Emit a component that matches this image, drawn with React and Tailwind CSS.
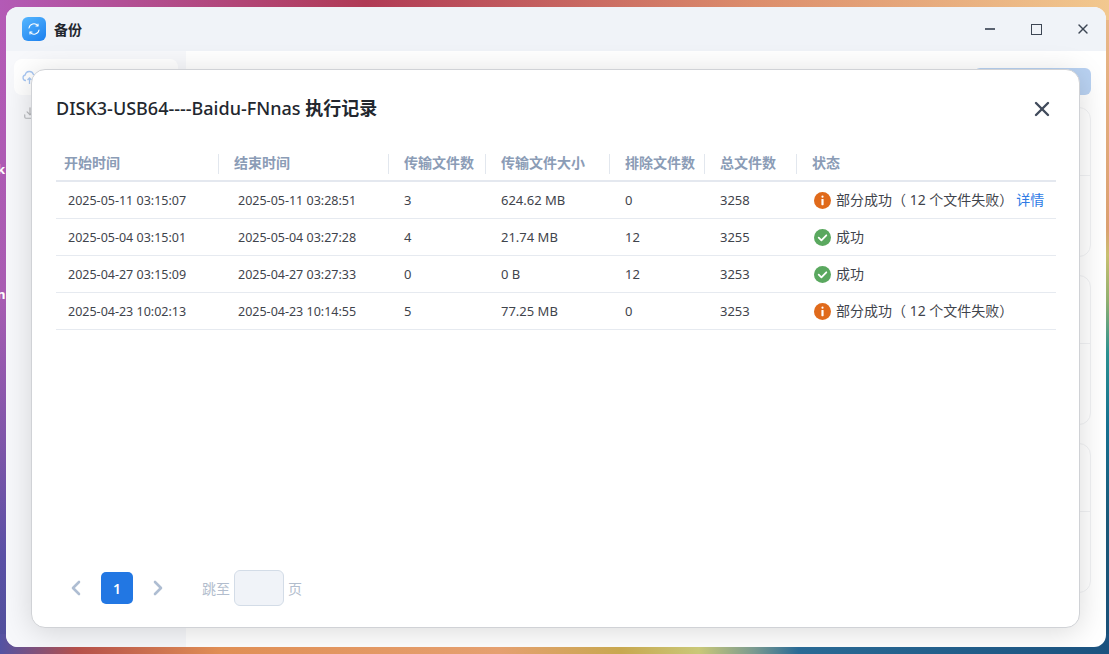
import { ChevronLeft, ChevronRight, X, Download } from "lucide-react";

const FONT = "font-['Noto_Sans','Noto_Sans_CJK_SC',sans-serif]";

const COLUMNS = [
  { label: "开始时间", head: "pl-2", cell: "pl-3 pt-[2px]" },
  { label: "结束时间", head: "pl-[15px]", cell: "pl-[19px] pt-[2px]" },
  { label: "传输文件数", head: "pl-[15px]", cell: "pl-[15px] pt-[2px]" },
  { label: "传输文件大小", head: "pl-[15px]", cell: "pl-[15px] pt-[2px]" },
  { label: "排除文件数", head: "pl-[15px]", cell: "pl-[15px] pt-[2px]" },
  { label: "总文件数", head: "pl-[15px]", cell: "pl-[15px] pt-[2px]" },
  { label: "状态", head: "pl-[15px]", cell: "pl-[17px]" },
];

const ROWS = [
  { start: "2025-05-11 03:15:07", end: "2025-05-11 03:28:51", count: "3", size: "624.62 MB", excluded: "0", total: "3258", partial: true, details: true },
  { start: "2025-05-04 03:15:01", end: "2025-05-04 03:27:28", count: "4", size: "21.74 MB", excluded: "12", total: "3255" },
  { start: "2025-04-27 03:15:09", end: "2025-04-27 03:27:33", count: "0", size: "0 B", excluded: "12", total: "3253" },
  { start: "2025-04-23 10:02:13", end: "2025-04-23 10:14:55", count: "5", size: "77.25 MB", excluded: "0", total: "3253", partial: true },
];

const GRID = "grid grid-cols-[163px_170px_97px_124px_95px_92px_1fr]";

function AppIcon() {
  return (
    <div className="flex h-6 w-6 items-center justify-center rounded-[6px] bg-[linear-gradient(145deg,#55b6ff,#1c7fee)]">
      <svg width="16" height="16" viewBox="0 0 16 16" fill="none" stroke="white" strokeWidth="1.1" strokeLinecap="round">
        <path d="M3 7A5 5 0 0 1 11.8 4.6" />
        <path d="M13 9A5 5 0 0 1 4.2 11.4" />
        <path d="M12 3v2h-2" />
        <path d="M4 13v-2h2" />
      </svg>
    </div>
  );
}

function InfoIcon() {
  return (
    <svg width="17" height="17" viewBox="0 0 17 17" className="shrink-0">
      <circle cx="8.5" cy="8.5" r="8.5" fill="#e06a1b" />
      <rect x="7.4" y="3.6" width="2.2" height="2.2" rx="1.1" fill="white" />
      <rect x="7.4" y="7" width="2.2" height="6.2" rx="0.6" fill="white" />
    </svg>
  );
}

function CheckIcon() {
  return (
    <svg width="17" height="17" viewBox="0 0 17 17" className="shrink-0">
      <circle cx="8.5" cy="8.5" r="8.5" fill="#5aa85f" />
      <path d="M4.7 8.7l2.7 2.6 4.9-5" fill="none" stroke="white" strokeWidth="1.8" strokeLinecap="round" strokeLinejoin="round" />
    </svg>
  );
}

function BackgroundCard() {
  return (
    <div className="flex h-[150px] flex-col rounded-[12px] border border-[#f1f2f4]">
      <div className="h-[68px] border-b border-[#f1f2f4]" />
    </div>
  );
}

function HistoryModal() {
  return (
    <div className="absolute left-[25px] top-[62px] flex h-[559px] w-[1049px] flex-col rounded-[14px] border border-[#d0d2d6] bg-white pl-[24px] pr-[23px] shadow-[0_4px_30px_rgba(0,0,0,0.15)]">
      <div className="flex h-[77px] items-center justify-between">
        <h2 className="text-[18px] font-medium text-[#23272e]">
          DISK3-USB64----Baidu-FNnas <span className="font-bold">执行记录</span>
        </h2>
        <button className="mr-[2px] text-[#414b5c]">
          <X size={24} strokeWidth={2.4} />
        </button>
      </div>

      {/* Table */}
      <div className="flex-1">
        <div className={`${GRID} h-[35px] items-center border-b-2 border-[#e4e8ef] text-[14px] font-semibold text-[#8b9cb6]`}>
          {COLUMNS.map((col, i) => (
            <div key={col.label} className={`${col.head} ${i === 6 ? "" : "border-r border-[#e2e7ee]"} flex h-5 items-center`}>
              <span className="mb-[2px]">{col.label}</span>
            </div>
          ))}
        </div>
        {ROWS.map((row) => (
          <div key={row.start} className={`${GRID} h-[37px] items-center border-b border-[#e6eaf0] text-[13px] text-[#3f444c]`}>
            <div className={`${COLUMNS[0].cell} text-[12.5px]`}>{row.start}</div>
            <div className={`${COLUMNS[1].cell} text-[12.5px]`}>{row.end}</div>
            <div className={COLUMNS[2].cell}>{row.count}</div>
            <div className={COLUMNS[3].cell}>{row.size}</div>
            <div className={COLUMNS[4].cell}>{row.excluded}</div>
            <div className={COLUMNS[5].cell}>{row.total}</div>
            <div className={`${COLUMNS[6].cell} flex items-center text-[14px]`}>
              {row.partial ? <InfoIcon /> : <CheckIcon />}
              <span className="mb-[2px] ml-[5px]">{row.partial ? "部分成功（ 12 个文件失败）" : "成功"}</span>
              {row.details && <a className="mb-[2px] ml-[3px] text-[#2f7be5]">详情</a>}
            </div>
          </div>
        ))}
      </div>

      {/* Pagination */}
      <div className="mb-[21px] flex items-center text-[14px] text-[#b2bdcd]">
        <ChevronLeft size={24} strokeWidth={2.6} className="ml-2 text-[#aebdd2]" />
        <button className="ml-[13px] h-8 w-8 rounded-[5px] bg-[#2277e3] text-[14px] font-semibold text-white">1</button>
        <ChevronRight size={24} strokeWidth={2.6} className="ml-[13px] text-[#aebdd2]" />
        <span className="ml-[32px]">跳至</span>
        <div className="ml-[4px] h-9 w-[50px] rounded-[6px] border border-[#d3dce7] bg-[#f0f3f8]" />
        <span className="ml-[4px]">页</span>
      </div>
    </div>
  );
}

export default function App() {
  return (
    <div className={`${FONT} relative h-[654px] w-[1109px] overflow-hidden pl-[6px] pt-[7px] [background:linear-gradient(90deg,#b35ab6,#b03a55_33%,#dc8d6c_68%,#f2c88f)_top/100%_20px_no-repeat,linear-gradient(90deg,#5352a3,#b5504a_7%,#e08f55_20%,#e5a070_45%,#c8a850_56%,#c9c878_63%,#7a9a90_68%,#2a6a95_72%,#1b527f)_bottom/100%_20px_no-repeat,linear-gradient(180deg,#b55ab6,#a85cb2_45%,#7a55a8_70%,#5a50a5_85%,#4f4f9a)_left/20px_100%_no-repeat,linear-gradient(180deg,#eab98a,#dba070_35%,#c8c070_39%,#90b070_46%,#2a9090_54%,#157090_65%,#1a5878_80%,#1a4f78)_right/20px_100%_no-repeat]`}>
      {/* Desktop icon labels cut off by the window */}
      <span className="absolute left-[-3px] top-[160px] text-[13px] font-bold text-white">k</span>
      <span className="absolute left-[-3px] top-[285px] text-[13px] font-bold text-white">n</span>

      <div className="relative flex h-[640px] w-[1100px] flex-col overflow-hidden rounded-[12px] bg-white">
        {/* Title bar */}
        <div className="flex h-[44px] shrink-0 items-center bg-[#f0f3f8] pl-4">
          <AppIcon />
          <span className="ml-2 text-[14px] font-bold text-[#23272e]">备份</span>
          <div className="ml-auto flex items-center text-[#3d4654]">
            <div className="h-[2px] w-[10px] bg-[#5a6270]" />
            <div className="ml-[36px] h-[11px] w-[11px] border-[1.5px] border-[#3d4654]" />
            <X size={16} strokeWidth={2} className="ml-[33px] mr-[15px]" />
          </div>
        </div>

        {/* Faded page behind the modal */}
        <div className="flex flex-1">
          <aside className="w-[180px] bg-[#f7f8fb] px-2 pt-2">
            <div className="flex h-9 items-center rounded-[8px] bg-white pl-2">
              <svg width="15" height="16" viewBox="0 0 15 16" fill="none" stroke="#a9c8f3" strokeWidth="1.3">
                <path d="M4 11.5H3.5a2.8 2.8 0 0 1-.3-5.5 4.2 4.2 0 0 1 8.1-.7 3.2 3.2 0 0 1 .4 6.2" />
                <path d="M7.5 15V9M5.5 11l2-2 2 2" />
              </svg>
            </div>
            <div className="flex h-9 items-center pl-[9px]">
              <Download size={14} className="text-[#b7b9bd]" />
            </div>
          </aside>
          <main className="flex flex-1 flex-col pl-[5px] pr-[15px] pt-[17px]">
            <div className="flex justify-end">
              <div className="h-[27px] w-[117px] rounded-[6px] bg-[#b9d2f2]" />
            </div>
            <div className="mt-3 flex flex-col gap-[18px]">
              <BackgroundCard />
              <BackgroundCard />
              <BackgroundCard />
            </div>
          </main>
        </div>

        <HistoryModal />
      </div>
    </div>
  );
}
